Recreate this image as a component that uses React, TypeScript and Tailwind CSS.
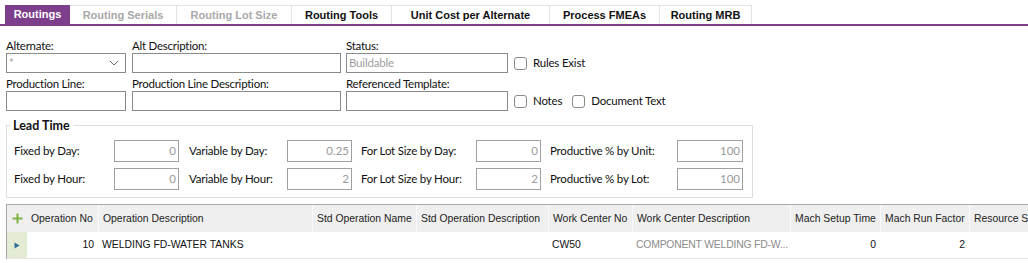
import React from "react";

const UI = "font-['Lato',sans-serif]";
const AR = "font-['Liberation_Sans',Arial,sans-serif]";

const tabs: { label: string; w: number; state: "active" | "disabled" | "normal" }[] = [
  { label: "Routings", w: 65, state: "active" },
  { label: "Routing Serials", w: 107, state: "disabled" },
  { label: "Routing Lot Size", w: 115, state: "disabled" },
  { label: "Routing Tools", w: 100, state: "normal" },
  { label: "Unit Cost per Alternate", w: 158, state: "normal" },
  { label: "Process FMEAs", w: 110, state: "normal" },
  { label: "Routing MRB", w: 92, state: "normal" },
];

function Field({ label, w, value, select }: { label: string; w: number; value?: string; select?: boolean }) {
  return (
    <div className="flex flex-col" style={{ width: w }}>
      <div className="h-[15px] leading-[15px] text-[11.5px] tracking-[-0.25px] text-[#111] whitespace-nowrap">{label}</div>
      <div className="h-[20px] border border-[#8a8a8a] bg-white flex items-center pl-[2px] pr-[4px] text-[11.5px] tracking-[-0.2px] text-[#a0a0a0]">
        <span className="flex-1">{value}</span>
        {select && (
          <svg width="10" height="6" viewBox="0 0 10 6" className="mr-[2px]">
            <path d="M1 1 L5 5 L9 1" fill="none" stroke="#6b6b6b" strokeWidth="1" />
          </svg>
        )}
      </div>
    </div>
  );
}

function Check({ label }: { label: string }) {
  return (
    <div className="flex items-center gap-[6px] h-[20px]">
      <div className="w-[13px] h-[13px] rounded-[3px] border border-[#8a8a8a] bg-white" />
      <span className="text-[11.5px] tracking-[-0.2px] text-[#111] whitespace-nowrap">{label}</span>
    </div>
  );
}

function LT({ label, lw, value, iw = 65, gap }: { label: string; lw: number; value: string; iw?: number; gap: number }) {
  return (
    <div className="flex items-center" style={{ marginLeft: gap }}>
      <div className="text-[11.5px] tracking-[-0.2px] text-[#111] whitespace-nowrap" style={{ width: lw }}>
        {label}
      </div>
      <div
        className="h-[22px] border border-[#a0a0a0] bg-white flex items-center justify-end pr-[2px] text-[11.5px] text-[#9a9a9a]"
        style={{ width: iw }}
      >
        {value}
      </div>
    </div>
  );
}

const cols: { label: string; w: number }[] = [
  { label: "Operation No", w: 71 },
  { label: "Operation Description", w: 214 },
  { label: "Std Operation Name", w: 104 },
  { label: "Std Operation Description", w: 132 },
  { label: "Work Center No", w: 84 },
  { label: "Work Center Description", w: 158 },
  { label: "Mach Setup Time", w: 90 },
  { label: "Mach Run Factor", w: 89 },
  { label: "Resource Setup", w: 120 },
];

const row: { v: string; right?: boolean; gray?: boolean }[] = [
  { v: "10", right: true },
  { v: "WELDING FD-WATER TANKS" },
  { v: "" },
  { v: "" },
  { v: "CW50" },
  { v: "COMPONENT WELDING FD-W...", gray: true },
  { v: "0", right: true },
  { v: "2", right: true },
  { v: "" },
];

export default function App() {
  return (
    <div className={`w-[1028px] h-[263px] bg-white overflow-hidden ${UI}`}>
      {/* Tabs */}
      <div className="flex pl-[5px] pt-[5px] border-b-2 border-[#7d3e8c]">
        {tabs.map((t) => (
          <div
            key={t.label}
            className={`h-[19px] flex items-center justify-center text-[11px] font-bold whitespace-nowrap ${AR} ${
              t.state === "active"
                ? "bg-[#7d3e8c] text-white"
                : t.state === "disabled"
                ? "border-t border-r border-[#e3e3e3] text-[#a8a8a8]"
                : "border-t border-r border-[#e3e3e3] text-[#111]"
            }`}
            style={{ width: t.w }}
          >
            {t.label}
          </div>
        ))}
      </div>

      {/* Form */}
      <div className="px-[6px]">
        <div className="flex items-end mt-[12px]">
          <Field label="Alternate:" w={120} value="*" select />
          <div className="ml-[6px]">
            <Field label="Alt Description:" w={209} />
          </div>
          <div className="ml-[5px]">
            <Field label="Status:" w={162} value="Buildable" />
          </div>
          <div className="ml-[6px]">
            <Check label="Rules Exist" />
          </div>
        </div>
        <div className="flex items-end mt-[3px]">
          <Field label="Production Line:" w={120} />
          <div className="ml-[6px]">
            <Field label="Production Line Description:" w={209} />
          </div>
          <div className="ml-[5px]">
            <Field label="Referenced Template:" w={162} />
          </div>
          <div className="ml-[6px] flex gap-[10px]">
            <Check label="Notes" />
            <Check label="Document Text" />
          </div>
        </div>

        {/* Lead Time */}
        <fieldset className="mt-[7px] w-[747px] border border-[#dedede] pl-[7px] pb-[7px]">
          <legend className="ml-[-4px] px-[3px] text-[12.5px] font-bold leading-[15px] text-[#111]">Lead Time</legend>
          <div className="flex flex-col gap-[6px] pt-[7px]">
            <div className="flex">
              <LT label="Fixed by Day:" lw={100} value="0" gap={0} />
              <LT label="Variable by Day:" lw={98} value="0.25" gap={10} />
              <LT label="For Lot Size by Day:" lw={115} value="0" gap={9} />
              <LT label="Productive % by Unit:" lw={127} value="100" gap={9} iw={66} />
            </div>
            <div className="flex">
              <LT label="Fixed by Hour:" lw={100} value="0" gap={0} />
              <LT label="Variable by Hour:" lw={98} value="2" gap={10} />
              <LT label="For Lot Size by Hour:" lw={115} value="2" gap={9} />
              <LT label="Productive % by Lot:" lw={127} value="100" gap={9} iw={66} />
            </div>
          </div>
        </fieldset>
      </div>

      {/* Grid */}
      <div className={`ml-[6px] mt-[6px] border-t border-l border-[#a8a8a8] ${AR} text-[10.4px]`}>
        <div className="flex h-[27px] bg-[#efefef] text-[#222]">
          <div className="w-[20px] shrink-0 flex items-center justify-center">
            <svg width="11" height="11" viewBox="0 0 11 11">
              <path d="M5.5 0.5 V10.5 M0.5 5.5 H10.5" stroke="#7cb342" strokeWidth="2" />
            </svg>
          </div>
          {cols.map((c, i) => (
            <div
              key={c.label}
              className={`shrink-0 flex items-center pl-[4px] whitespace-nowrap overflow-hidden ${i > 0 ? "border-l border-[#fafafa]" : ""}`}
              style={{ width: c.w }}
            >
              {c.label}
            </div>
          ))}
        </div>
        <div className="flex h-[27px] border-b border-[#e6e6e6] text-[#111]">
          <div className="w-[20px] shrink-0 bg-[#e3ebd5] flex items-center justify-center">
            <svg width="6" height="7" viewBox="0 0 6 7">
              <path d="M0.5 0.5 L5.5 3.5 L0.5 6.5 Z" fill="#2d6e99" />
            </svg>
          </div>
          {row.map((c, i) => (
            <div
              key={i}
              className={`shrink-0 flex items-center whitespace-nowrap ${
                c.right ? "justify-end pr-[4px]" : "pl-[4px]"
              } ${c.gray ? "text-[#8c8c8c] tracking-[-0.2px]" : ""}`}
              style={{ width: cols[i].w }}
            >
              {c.v}
            </div>
          ))}
        </div>
      </div>
    </div>
  );
}
